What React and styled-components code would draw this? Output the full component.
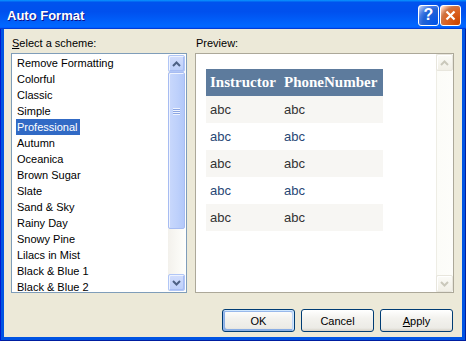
import React from 'react';
import styled, { createGlobalStyle } from 'styled-components';

const Global = createGlobalStyle`
  html, body { margin: 0; padding: 0; background: #0054e3; }
  body { width: 466px; height: 341px; overflow: hidden; }
  * { box-sizing: border-box; }
`;

const Window = styled.div`
  width: 466px;
  height: 341px;
  display: flex;
  flex-direction: column;
  background: #0054e3;
  box-shadow: inset 1px 0 #0019cf, inset -1px 0 #001ea0, inset 0 -1px #001ea0;
  font-family: "Liberation Sans", Arial, sans-serif;
  font-size: 11px;
  color: #000;
`;

const TitleBar = styled.div`
  height: 29px;
  flex: none;
  display: flex;
  align-items: center;
  padding: 2px 5px 0 7px;
  background: linear-gradient(180deg, #0997ff, #0053ee 8%, #0050ee 40%, #06f 88%, #06f 93%, #005bff 95%, #003dd7 96%, #003dd7);
`;

const Title = styled.div`
  flex: 1;
  color: #fff;
  font-weight: bold;
  font-size: 13px;
  text-shadow: 1px 1px #0f1089;
`;

const Caption = styled.div`
  display: flex;
  gap: 1px;
  margin-top: -1px;
`;

const CapButton = styled.div`
  width: 21px;
  height: 21px;
  border: 1px solid #fff;
  border-radius: 3px;
  display: flex;
  align-items: center;
  justify-content: center;
  color: #fff;
  font-weight: bold;
  font-size: 16px;
  background: ${p => p.$close
    ? 'radial-gradient(circle at 90% 90%, #cc4600 0%, #dc6527 55%, #cd7546 70%, #ffccb2 90%, #fff 100%)'
    : 'radial-gradient(circle at 90% 90%, #0054e9 0%, #2263d5 55%, #4479e4 70%, #a3bbec 90%, #fff 100%)'};
`;

const Client = styled.div`
  flex: 1;
  margin: 0 4px 4px;
  background: #ece9d8;
  padding: 8px 8px 0 7px;
  display: flex;
  flex-direction: column;
`;

const Columns = styled.div`
  display: grid;
  grid-template-columns: 176px 259px;
  column-gap: 8px;
`;

const Panel = styled.div`
  display: flex;
  flex-direction: column;
`;

const Label = styled.div`
  height: 13px;
  line-height: 13px;
  margin: 0 0 3px 1px;
`;

const ListBox = styled.div`
  height: 240px;
  border: 1px solid #7f9db9;
  background: #fff;
  display: flex;
  padding: 1px 1px 1px 0;
  overflow: hidden;
`;

const Items = styled.ul`
  flex: 1;
  margin: 0;
  padding: 0 0 0 4px;
  list-style: none;
  overflow: hidden;
`;

const Item = styled.li`
  height: 16px;
  line-height: 16px;
  white-space: nowrap;
`;

const ItemText = styled.span`
  display: inline-block;
  padding: 0 2px 0 1px;
  background: ${p => (p.$selected ? '#316ac5' : 'transparent')};
  color: ${p => (p.$selected ? '#fff' : '#000')};
`;

const VScroll = styled.div`
  width: 17px;
  flex: none;
  display: flex;
  flex-direction: column;
  background: ${p => (p.$disabled
    ? 'linear-gradient(90deg, #eeede5 0, #eeede5 1px, #fcfcf8 1px, #fdfdfa)'
    : 'linear-gradient(90deg, #f3f1ec, #fefefb)')};
`;

const ScrollBtn = styled.div`
  height: 17px;
  flex: none;
  border-radius: 2px;
  display: flex;
  align-items: center;
  justify-content: center;
  ${p => (p.$disabled
    ? `border: 1px solid #e8e6dd; background: linear-gradient(180deg, #fbfbf7, #f1efe6); box-shadow: inset 1px 1px #fff;`
    : `border: 1px solid #b1c6f6; background: linear-gradient(180deg, #d2ddfc, #bccffa); box-shadow: inset 1px 1px #eef3fe, inset -1px -1px #a8bdf3;`)}
`;

const Thumb = styled.div`
  height: 157px;
  flex: none;
  border: 1px solid #a7bcf2;
  border-radius: 2px;
  background: linear-gradient(90deg, #c9d8fc, #bdd0fb 60%, #b3c8f9);
  box-shadow: inset 1px 1px #eef3fe;
  display: flex;
  align-items: center;
  justify-content: center;
  padding-bottom: 2px;
`;

const Track = styled.div`
  flex: 1;
`;

const Grip = styled.div`
  width: 7px;
  height: 7px;
  background: repeating-linear-gradient(180deg, #eef3fe 0, #eef3fe 1px, #8ca6e3 1px, #8ca6e3 2px);
  margin-top: -76px;
`;

const PreviewBox = styled.div`
  height: 240px;
  border: 1px solid #aca899;
  background: #fff;
  display: flex;
  overflow: hidden;
`;

const PreviewContent = styled.div`
  flex: 1;
  padding: 15px 0 0 10px;
`;

const Table = styled.table`
  border-collapse: collapse;
  border-spacing: 0;
  table-layout: fixed;
  width: 177px;
`;

const Th = styled.th`
  height: 27px;
  width: ${p => p.$w}px;
  padding: 0 0 0 4px;
  text-align: left;
  background: #5d7b9d;
  color: #fff;
  font-family: "Liberation Serif", "Times New Roman", serif;
  font-weight: bold;
  font-size: 15px;
  white-space: nowrap;
`;

const Td = styled.td`
  height: 27px;
  padding: 0 0 0 4px;
  font-family: "Liberation Sans", Arial, sans-serif;
  font-size: 13px;
  background: ${p => (p.$alt ? '#fff' : '#f7f6f3')};
  color: ${p => (p.$alt ? '#284775' : '#333333')};
`;

const ButtonRow = styled.div`
  display: flex;
  justify-content: flex-end;
  gap: 6px;
  margin-top: 16px;
  padding-right: 1px;
`;

const Button = styled.button`
  width: 73px;
  height: 23px;
  border: 1px solid #003c74;
  border-radius: 3px;
  background: linear-gradient(180deg, #fff, #f3f2ee 40%, #ecebe6 86%, #d6d0c5);
  font-family: "Liberation Sans", Arial, sans-serif;
  font-size: 11px;
  color: #000;
  padding: 0;
  ${p => (p.$default
    ? 'box-shadow: inset -1px 1px #cee7ff, inset 1px 2px #98b8ea, inset -2px 2px #bcd4f6, inset 1px -1px #89ade4, inset 2px -2px #89ade4;'
    : '')}
`;

const U = styled.span`
  text-decoration: underline;
`;

const Arrow = ({ down, color }) => (
  <svg width="9" height="6" viewBox="0 0 9 6">
    <polyline
      points={down ? '1,1 4.5,4.5 8,1' : '1,5 4.5,1.5 8,5'}
      fill="none"
      stroke={color}
      strokeWidth="2"
    />
  </svg>
);

const schemes = [
  'Remove Formatting', 'Colorful', 'Classic', 'Simple', 'Professional', 'Autumn',
  'Oceanica', 'Brown Sugar', 'Slate', 'Sand & Sky', 'Rainy Day', 'Snowy Pine',
  'Lilacs in Mist', 'Black & Blue 1', 'Black & Blue 2',
];

export default function App() {
  return (
    <>
      <Global />
      <Window>
        <TitleBar>
          <Title>Auto Format</Title>
          <Caption>
            <CapButton>?</CapButton>
            <CapButton $close>
              <svg width="11" height="11" viewBox="0 0 11 11">
                <path d="M1.5 1.5 L9.5 9.5 M9.5 1.5 L1.5 9.5" stroke="#fff" strokeWidth="2.2" />
              </svg>
            </CapButton>
          </Caption>
        </TitleBar>
        <Client>
          <Columns>
            <Panel>
              <Label><U>S</U>elect a scheme:</Label>
              <ListBox>
                <Items>
                  {schemes.map(s => (
                    <Item key={s}>
                      <ItemText $selected={s === 'Professional'}>{s}</ItemText>
                    </Item>
                  ))}
                </Items>
                <VScroll>
                  <ScrollBtn><Arrow color="#4d6185" /></ScrollBtn>
                  <Thumb><Grip /></Thumb>
                  <Track />
                  <ScrollBtn><Arrow down color="#4d6185" /></ScrollBtn>
                </VScroll>
              </ListBox>
            </Panel>
            <Panel>
              <Label>Preview:</Label>
              <PreviewBox>
                <PreviewContent>
                  <Table>
                    <thead>
                      <tr>
                        <Th $w={74}>Instructor</Th>
                        <Th $w={103}>PhoneNumber</Th>
                      </tr>
                    </thead>
                    <tbody>
                      {[0, 1, 2, 3, 4].map(i => (
                        <tr key={i}>
                          <Td $alt={i % 2 === 1}>abc</Td>
                          <Td $alt={i % 2 === 1}>abc</Td>
                        </tr>
                      ))}
                    </tbody>
                  </Table>
                </PreviewContent>
                <VScroll $disabled>
                  <ScrollBtn $disabled><Arrow color="#cac8bb" /></ScrollBtn>
                  <Track />
                  <ScrollBtn $disabled><Arrow down color="#cac8bb" /></ScrollBtn>
                </VScroll>
              </PreviewBox>
            </Panel>
          </Columns>
          <ButtonRow>
            <Button $default>OK</Button>
            <Button>Cancel</Button>
            <Button><U>A</U>pply</Button>
          </ButtonRow>
        </Client>
      </Window>
    </>
  );
}
